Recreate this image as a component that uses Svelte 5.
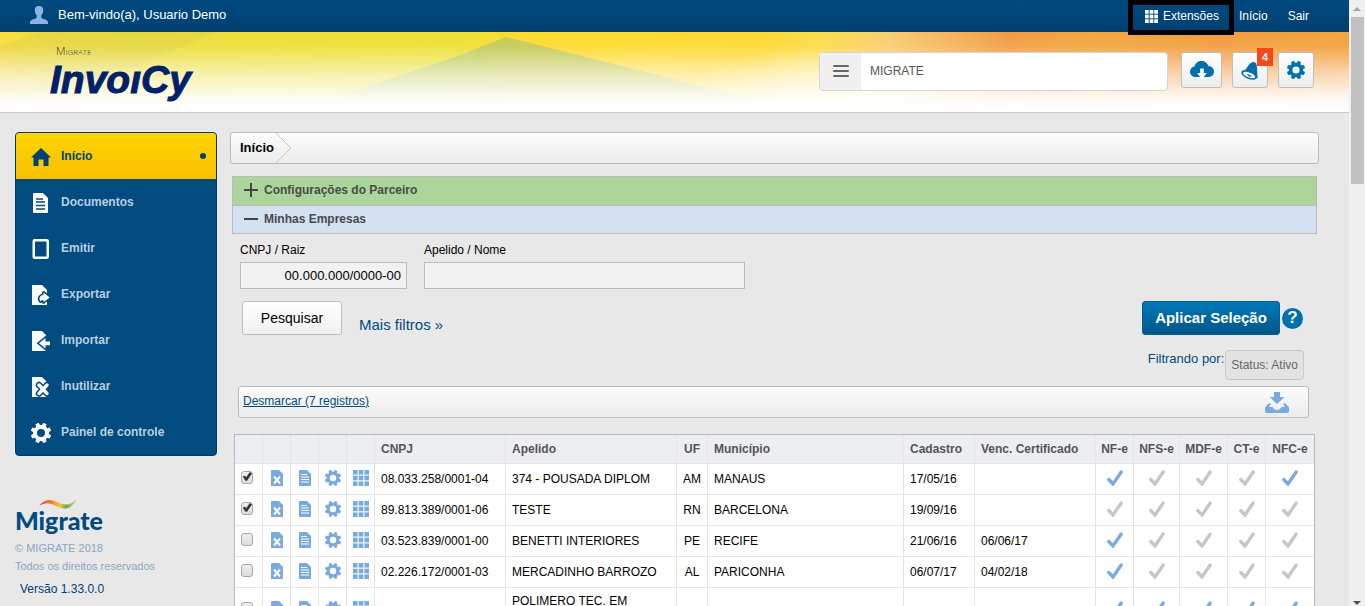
<script>
  const menu = [
    { label: 'Início', icon: 'home', active: true },
    { label: 'Documentos', icon: 'doc' },
    { label: 'Emitir', icon: 'tablet' },
    { label: 'Exportar', icon: 'export' },
    { label: 'Importar', icon: 'import' },
    { label: 'Inutilizar', icon: 'void' },
    { label: 'Painel de controle', icon: 'gear' }
  ];

  const docTypes = ['NF-e', 'NFS-e', 'MDF-e', 'CT-e', 'NFC-e'];

  const companies = [
    { on: true, cnpj: '08.033.258/0001-04', name: '374 - POUSADA DIPLOM', uf: 'AM', city: 'MANAUS', date: '17/05/16', cert: '', docs: [1, 0, 0, 0, 1] },
    { on: true, cnpj: '89.813.389/0001-06', name: 'TESTE', uf: 'RN', city: 'BARCELONA', date: '19/09/16', cert: '', docs: [0, 0, 0, 0, 0] },
    { on: false, cnpj: '03.523.839/0001-00', name: 'BENETTI INTERIORES', uf: 'PE', city: 'RECIFE', date: '21/06/16', cert: '06/06/17', docs: [1, 0, 0, 0, 0] },
    { on: false, cnpj: '02.226.172/0001-03', name: 'MERCADINHO BARROZO', uf: 'AL', city: 'PARICONHA', date: '06/07/17', cert: '04/02/18', docs: [1, 0, 0, 0, 0] },
    { on: false, cnpj: '', name: 'POLIMERO TEC. EM', uf: '', city: '', date: '', cert: '', docs: [1, 1, 1, 1, 1], tall: true }
  ];

  // Eight-toothed gear around (10,10) with a round hole.
  function gear(outer, inner, hole) {
    const at = (r, deg) => {
      const a = (deg * Math.PI) / 180;
      return `${(10 + r * Math.cos(a)).toFixed(2)} ${(10 + r * Math.sin(a)).toFixed(2)}`;
    };
    const pts = [];
    for (let i = 0; i < 8; i++) {
      const c = i * 45 + 22.5;
      pts.push(at(inner, c - 15), at(outer, c - 10), at(outer, c + 10), at(inner, c + 15));
    }
    return `M${pts.join('L')}ZM${10 - hole} 10a${hole} ${hole} 0 1 0 ${2 * hole} 0a${hole} ${hole} 0 1 0 ${-2 * hole} 0Z`;
  }

  const gearPath = gear(10.4, 8, 4);
  const cells = [0, 1, 2].flatMap((y) => [0, 1, 2].map((x) => [x * 5.7, y * 5.7]));
</script>

{#snippet grid()}
  <svg class="grid" viewBox="0 0 16 16" aria-hidden="true">
    {#each cells as [x, y]}<rect {x} {y} width="4.600" height="4.600" />{/each}
  </svg>
{/snippet}

{#snippet gearIcon()}
  <svg class="gear" viewBox="0 0 20 20" aria-hidden="true"><path fill-rule="evenodd" d={gearPath} /></svg>
{/snippet}

<div class="shell">
  <div class="page">
    <div class="topbar">
      <svg class="user" viewBox="0 0 18 18" aria-hidden="true">
        <path d="M9 0C6.200 0 4.800 1.600 4.800 4c0 2.200.6 4 1.900 5.300v2C6.500 13.500 0 13 0 16.500V18h18v-1.500C18 13 11.500 13.500 11.300 11.300v-2C12.600 8 13.200 6.200 13.200 4c0-2.400-1.400-4-4.200-4Z" />
      </svg>
      <span class="hello">Bem-vindo(a), Usuario Demo</span>
      <nav class="toplinks">
        <a class="ext" href="#ext">{@render grid()}Extensões</a>
        <a href="#inicio">Início</a>
        <a href="#sair">Sair</a>
      </nav>
    </div>

    <header class="banner">
      <svg class="art" viewBox="0 0 1349 80" preserveAspectRatio="none" aria-hidden="true">
        <defs>
          <linearGradient id="hue">
            <stop offset="0" stop-color="#fbdc3a" />
            <stop offset=".06" stop-color="#ecdd3a" />
            <stop offset=".34" stop-color="#ebe032" />
            <stop offset=".38" stop-color="#fddb2c" />
            <stop offset=".56" stop-color="#fcd82e" />
            <stop offset=".61" stop-color="#fbdc4a" />
            <stop offset=".66" stop-color="#f9cc70" />
            <stop offset=".75" stop-color="#f29a44" />
            <stop offset=".81" stop-color="#f3a23e" />
            <stop offset=".9" stop-color="#f1953e" />
            <stop offset="1" stop-color="#f2a03c" />
          </linearGradient>
          <linearGradient id="fade" x1="0" y1="0" x2="0" y2="1">
            <stop offset="0" stop-color="#fff" stop-opacity="0" />
            <stop offset=".18" stop-color="#fff" stop-opacity=".08" />
            <stop offset=".55" stop-color="#fff" stop-opacity=".62" />
            <stop offset=".85" stop-color="#fff" stop-opacity=".96" />
            <stop offset="1" stop-color="#fff" />
          </linearGradient>
          <radialGradient id="glow">
            <stop offset="0" stop-color="#fff" stop-opacity=".5" />
            <stop offset="1" stop-color="#fff" stop-opacity="0" />
          </radialGradient>
        </defs>
        <rect width="1349" height="80" fill="url(#hue)" />
        <path d="M0 14 40 0H215L120 42 0 80Z" fill="#cfc94a" fill-opacity=".3" />
        <path d="M506 5 750 66V80H350V60L455 25Z" fill="#a3c06c" fill-opacity=".62" />
        <path d="M1005 20 1065 0H1349V4L1270 24Z" fill="#f3ac3c" fill-opacity=".3" />
        <rect width="1349" height="80" fill="url(#fade)" />
        <ellipse cx="850" cy="56" rx="160" ry="40" fill="url(#glow)" />
      </svg>
      <a class="logo" href="#inicio">
        <small>Migrate</small>
        <strong>InvoıCy</strong>
      </a>
      <div class="company">
        <button type="button" aria-label="Empresas">
          <svg viewBox="0 0 16 12" aria-hidden="true"><path d="M1 1h14M1 6h14M1 11h14" stroke="#666" stroke-width="2" stroke-linecap="round" /></svg>
        </button>
        <input type="text" aria-label="Empresa" value="MIGRATE" />
      </div>
      <div class="tools">
        <button type="button" class="wide" aria-label="Downloads">
          <svg class="cloud" viewBox="0 0 24 18" aria-hidden="true">
            <path d="M6 16C2.500 16 0 13.700 0 10.700 0 8 1.800 6 4.500 5.600 5.300 2 8 0 11.500 0c3.300 0 6 2 6.900 5C21.700 5.200 24 7.500 24 10.500c0 3.200-2.300 5.500-5.600 5.500Z" />
            <path d="M10.200 7.500h3.600V12h3L12 18.500 7.200 12h3Z" fill="#fff" />
          </svg>
        </button>
        <button type="button" aria-label="Notificações">
          <svg class="bell" viewBox="0 0 20 20" aria-hidden="true">
            <path d="M12 1.200c1.500-1.300 4.500-.2 5 1.200 1 3.600 1 6 1 9.600l.4 6.600L.8 12.500 5 9C7 7 8 3 12 1.200Z" />
            <ellipse cx="9.200" cy="14.800" rx="9.300" ry="4.600" transform="rotate(21 9.200 14.800)" />
            <ellipse cx="9" cy="15" rx="7.200" ry="2.700" transform="rotate(21 9 15)" fill="#fff" />
            <path d="M7 14 12 15.800c-.6 2.200-5 1.500-5-1.800Z" />
          </svg>
          <span class="count">4</span>
        </button>
        <button type="button" aria-label="Configurações">{@render gearIcon()}</button>
      </div>
    </header>

    <div class="body">
      <aside>
        <nav class="menu">
          {#each menu as m}
            <a href={'#' + m.icon} class:active={m.active}>
              {#if m.icon === 'gear'}
                {@render gearIcon()}
              {:else}
                <svg viewBox="0 0 20 20" aria-hidden="true">
                  {#if m.icon === 'home'}
                    <path d="M10 1 0 10.500h2.500V19H7.500v-6.500h5V19h5v-8.500H20Z" />
                  {:else if m.icon === 'doc'}
                    <path d="M2 1q0-1 1-1h9l5 5v14q0 1-1 1H3q-1 0-1-1Z" />
                    <path d="M5 6h7M5 9h9M5 12.500h9M5 16h9" stroke="#004b80" stroke-width="1.300" />
                  {:else if m.icon === 'tablet'}
                    <path fill-rule="evenodd" d="M3.500 0h12Q18 0 18 2v16q0 2-2.500 2h-12Q1.500 20 1.500 18V2q0-2 2-2ZM4 2.500v15h11.500v-15Z" />
                  {:else}
                    <path d="M1 0h10l5 5v15H1Z" />
                    {#if m.icon === 'export'}
                      <path d="M12.500 7.500 18.700 12.400 12.500 17.300v-2.600q-2.200.2-3 1.800-2-2.200-.7-4.500 1.200-2 3.700-2Z" stroke="#004b80" stroke-width="3" stroke-linejoin="round" />
                      <path d="M12.500 7.500 18.700 12.400 12.500 17.300v-2.600q-2.200.2-3 1.800-2-2.200-.7-4.500 1.200-2 3.700-2Z" />
                    {:else if m.icon === 'import'}
                      <path d="M19 10.500h-4.500v-3.500L8 12.300l6.500 5.300v-3.400H19Z" stroke="#004b80" stroke-width="3" />
                      <path d="M19 10.500h-4.500v-3.500L8 12.300l6.500 5.300v-3.400H19Z" />
                    {:else}
                      <path d="M8 8 16 16.500M16 8 8 16.500" stroke="#004b80" stroke-width="6.500" stroke-linecap="round" />
                      <path d="M8 8 16 16.500M16 8 8 16.500" stroke="#fff" stroke-width="3.400" stroke-linecap="round" />
                    {/if}
                  {/if}
                </svg>
              {/if}
              <span>{m.label}</span>
              {#if m.active}<i></i>{/if}
            </a>
          {/each}
        </nav>
        <footer>
          <div class="brand">
            <svg viewBox="0 0 38 12" preserveAspectRatio="none" aria-hidden="true">
              <defs>
                <linearGradient id="wave"><stop offset="0" stop-color="#d9402a" /><stop offset=".3" stop-color="#f07a2c" /><stop offset=".55" stop-color="#f5c93a" /><stop offset=".72" stop-color="#6aa66a" /><stop offset="1" stop-color="#e8d55a" /></linearGradient>
              </defs>
              <path d="M0 8.500C6-1 12 0 19 4S31 8 38 0C32 13 26 13.500 18 9S7 3.500 0 8.500Z" fill="url(#wave)" />
            </svg>
            <strong>Migrate</strong>
          </div>
          <p>© MIGRATE 2018</p>
          <p>Todos os direitos reservados</p>
          <p class="version">Versão 1.33.0.0</p>
        </footer>
      </aside>

      <main>
        <div class="crumbs bar">
          <a href="#inicio">Início</a>
          <svg viewBox="0 0 16 30" aria-hidden="true"><path d="M0 0 15 15 0 30" fill="none" stroke="#c6c6c6" /></svg>
        </div>

        <div class="panels">
          <button type="button" class="green">
            <svg viewBox="0 0 14 14" aria-hidden="true"><path d="M7 0v14M0 7h14" /></svg>Configurações do Parceiro
          </button>
          <button type="button" class="blue">
            <svg viewBox="0 0 14 14" aria-hidden="true"><path d="M0 7h14" /></svg>Minhas Empresas
          </button>
        </div>

        <form>
          <div class="fields">
            <div class="field short">
              <label for="cnpj">CNPJ / Raiz</label>
              <input id="cnpj" type="text" value="00.000.000/0000-00" />
            </div>
            <div class="field long">
              <label for="apelido">Apelido / Nome</label>
              <input id="apelido" type="text" />
            </div>
          </div>
          <div class="actions">
            <button type="button" class="search">Pesquisar</button>
            <a href="#filtros">Mais filtros »</a>
            <button type="button" class="apply">Aplicar Seleção</button>
            <button type="button" class="help" aria-label="Ajuda">?</button>
          </div>
          <div class="filters">
            <span>Filtrando por:</span>
            <span class="tag">Status: Ativo</span>
          </div>
        </form>

        <div class="toolbar bar">
          <a href="#desmarcar">Desmarcar (7 registros)</a>
          <button type="button" aria-label="Exportar lista">
            <svg viewBox="0 0 24 21" aria-hidden="true">
              <path d="M9 0h6v5h4.500L12 12 4.500 5H9Z" />
              <path d="M3.500 11.500H6.200L4 15h3.500q1.500 3 4.500 3t4.500-3H20l-2.200-3.500h2.700L24 15.500V19q0 2-2 2H2q-2 0-2-2v-3.500Z" />
            </svg>
          </button>
        </div>

        <table>
          <colgroup>
            <col class="c-sel" />
            {#each [1, 2, 3, 4] as n (n)}<col class="c-icon" />{/each}
            <col class="c-cnpj" /><col class="c-name" /><col class="c-uf" /><col /><col class="c-date" /><col class="c-cert" />
            <col class="c-small" /><col class="c-mid" /><col class="c-large" /><col class="c-small" /><col class="c-large" />
          </colgroup>
          <thead>
            <tr>
              <th></th><th></th><th></th><th></th><th></th>
              <th>CNPJ</th><th>Apelido</th><th class="mid">UF</th><th>Município</th><th>Cadastro</th><th>Venc. Certificado</th>
              {#each docTypes as d}<th class="mid">{d}</th>{/each}
            </tr>
          </thead>
          <tbody>
            {#each companies as c}
              <tr class:tall={c.tall}>
                <td class="sel"><input type="checkbox" checked={c.on} aria-label={c.name} /></td>
                <td class="pic">
                  <svg class="file" viewBox="0 0 12 16" aria-hidden="true"><path d="M1 0h7l4 4v12H0V1q0-1 1-1Z" /><path d="M3 6.500 9 13.500M9 6.500 3 13.500" stroke="#fff" stroke-width="2" /></svg>
                </td>
                <td class="pic">
                  <svg class="file" viewBox="0 0 12 16" aria-hidden="true"><path d="M1 0h7l4 4v11q0 1-1 1H1q-1 0-1-1V1q0-1 1-1Z" /><path d="M2 4.500h6M2 7h8M2 9.500h8M2 12h8" stroke="#fff" /></svg>
                </td>
                <td class="pic">{@render gearIcon()}</td>
                <td class="pic">{@render grid()}</td>
                <td>{c.cnpj}</td>
                <td class="name">{c.name}</td>
                <td class="mid">{c.uf}</td>
                <td>{c.city}</td>
                <td>{c.date}</td>
                <td>{c.cert}</td>
                {#each c.docs as ok}
                  <td class="pic">
                    <svg class="tick" class:ok viewBox="0 0 16 16" aria-hidden="true"><path d="M1.800 9.500 6 14 14.200 2" fill="none" stroke-width="3.300" stroke-linecap="round" /></svg>
                  </td>
                {/each}
              </tr>
            {/each}
          </tbody>
        </table>
      </main>
    </div>
  </div>

  <div class="scroll" aria-hidden="true">
    <svg viewBox="0 0 8 4"><path d="M4 0 8 4H0Z" fill="#a3a3a3" /></svg>
    <div class="thumb"></div>
    <svg viewBox="0 0 8 4"><path d="M0 0H8L4 4Z" fill="#505050" /></svg>
  </div>
</div>

<style>
  :global(body) {
    margin: 0;
    background: #e8e8e8;
  }
  .shell, .shell * { box-sizing: border-box; }
  .shell {
    display: flex;
    height: 100vh;
    overflow: hidden;
    font: 12px/18px 'Liberation Sans', Arial, sans-serif;
    color: #000;
  }
  button, input { font: inherit; margin: 0; }
  button { padding: 0; cursor: pointer; }
  a { color: inherit; text-decoration: none; }
  p { margin: 0; }
  svg { display: block; flex: none; }
  .page { flex: 1; min-width: 0; }
  .grid, .gear, .file { fill: #78aae0; }

  .topbar {
    display: flex;
    align-items: center;
    height: 32px;
    padding: 0 40px 2px 30px;
    gap: 10px;
    background: linear-gradient(#004a80, #00406f);
    color: #fff;
  }
  .user { width: 18px; height: 18px; fill: #8cb4e2; }
  .hello { font-size: 13px; }
  .toplinks {
    display: flex;
    align-items: center;
    gap: 20px;
    margin-left: auto;
    padding-top: 2px;
  }
  .ext { position: relative; display: flex; align-items: center; gap: 5px; }
  .ext .grid { width: 13px; height: 13px; fill: #fff; }
  .ext::after {
    content: '';
    position: absolute;
    z-index: 2;
    inset: -7px -15px -10px -17px;
    border: 5px solid #000;
  }

  .banner {
    position: relative;
    display: flex;
    align-items: flex-start;
    height: 81px;
    padding: 20px 35px 0 50px;
    gap: 13px;
    border-bottom: 1px solid #c9c9c9;
    background: #fff;
  }
  .art { position: absolute; inset: 0; width: 100%; height: 100%; }
  .logo {
    position: relative;
    display: flex;
    flex-direction: column;
    margin: -8px auto 0 0;
    color: #00206a;
  }
  .logo small {
    padding-left: 6px;
    font: 300 11px/14px 'Open Sans', sans-serif;
    font-variant: small-caps;
    color: #333;
  }
  .logo strong {
    font-size: 39px;
    font-style: italic;
    line-height: 44px;
    -webkit-text-stroke: 1px #00206a;
  }
  .company {
    position: relative;
    display: flex;
    flex: 0 1 349px;
    height: 39px;
    border: 1px solid #d5d5d5;
    border-radius: 4px;
    background: #fff;
    overflow: hidden;
  }
  .company button {
    display: flex;
    align-items: center;
    justify-content: center;
    width: 41px;
    padding-bottom: 1px;
    border: 0;
    background: #f0f0f0;
  }
  .company svg { width: 16px; height: 12px; }
  .company input {
    flex: 1;
    min-width: 0;
    padding: 0 9px 2px;
    border: 0;
    background: none;
    color: #555;
  }
  .tools { position: relative; display: flex; gap: 10px; }
  .tools button {
    position: relative;
    display: flex;
    align-items: center;
    justify-content: center;
    width: 36px;
    height: 36px;
    border: 1px solid #bfbfbf;
    border-radius: 3px;
    background: linear-gradient(#fff, #ededed);
  }
  .tools .wide { width: 41px; }
  .tools svg { fill: #0070ac; }
  .cloud { width: 24px; height: 18px; }
  .bell { width: 18px; height: 19px; }
  .tools .gear { width: 18px; height: 18px; }
  .count {
    position: absolute;
    top: -5px;
    right: -6px;
    width: 16px;
    background: #f8471a;
    color: #fff;
    font-size: 11px;
    font-weight: bold;
  }

  .body { display: flex; align-items: flex-start; gap: 13px; padding: 19px 30px 0 15px; }
  aside { flex: none; width: 202px; }
  .menu {
    border: 1px solid #003a68;
    border-radius: 4px;
    background: #004b80;
    overflow: hidden;
  }
  .menu a {
    display: flex;
    align-items: center;
    gap: 10px;
    height: 46px;
    padding: 0 10px 0 15px;
    color: #b9cfe2;
    font-weight: bold;
  }
  .menu svg { width: 20px; height: 20px; margin-top: 2px; fill: #fff; }
  .menu .active { background: linear-gradient(#fed500, #f7bf00); color: #004175; }
  .menu .active svg { fill: #004175; }
  .menu i { width: 6px; height: 6px; margin-left: auto; border-radius: 50%; background: #004175; }
  footer { margin-top: 43px; font-size: 11px; color: #8ba6c1; }
  .brand { width: 90px; margin-bottom: 8px; }
  .brand svg { width: 38px; height: 10px; margin-left: 24px; }
  .brand strong {
    display: block;
    font: 900 25px/22px Lato, sans-serif;
    color: #004b80;
  }
  .version { padding: 5px 0 0 5px; font-size: 12px; color: #004175; }

  main { flex: 1; min-width: 0; }
  .bar {
    display: flex;
    border: 1px solid #bcbcbc;
    border-radius: 3px;
    background: linear-gradient(#fcfcfc, #ececec);
  }
  .crumbs { height: 32px; padding-left: 9px; gap: 2px; }
  .crumbs a { font-size: 13px; font-weight: bold; line-height: 29px; }
  .crumbs svg { width: 16px; height: 30px; }
  .panels {
    display: flex;
    flex-direction: column;
    margin: 12px 2px 0;
    border: 1px solid #bbb;
  }
  .panels button {
    display: flex;
    align-items: center;
    gap: 6px;
    height: 27px;
    padding: 0 11px 2px;
    border: 0;
    color: #4a4a4a;
    font-weight: bold;
  }
  .panels svg { width: 14px; height: 14px; stroke: #444; stroke-width: 2; }
  .green { background: #acd59b; }
  .panels .green { height: 29px; border-bottom: 1px solid #bbb; }
  .blue { background: #d4e1f3; }

  form { padding: 7px 10px 0; }
  .fields { display: flex; gap: 17px; }
  .field { display: flex; flex-direction: column; gap: 3px; }
  .field input {
    width: 100%;
    height: 27px;
    padding: 0 5px;
    border: 1px solid #bbb;
    background: #f1f1f1;
    font-size: 13px;
    text-align: right;
  }
  .short { width: 167px; }
  .long { width: 321px; }
  .actions { display: flex; align-items: center; margin: 12px 6px 0 2px; }
  .actions a { margin: 13px auto 0 17px; color: #004b80; font-size: 15px; }
  .search {
    width: 100px;
    height: 34px;
    border: 1px solid #bfbfbf;
    border-radius: 3px;
    background: linear-gradient(#fff, #f0f0f0);
    font-size: 14px;
  }
  .apply {
    width: 138px;
    height: 34px;
    border: 1px solid #005e98;
    border-radius: 3px;
    background: linear-gradient(#0079b8, #00568a);
    color: #fff;
    font-size: 15px;
    font-weight: bold;
  }
  .help {
    width: 21px;
    height: 21px;
    margin-left: 2px;
    border: 0;
    border-radius: 50%;
    background: #0070ac;
    color: #fff;
    font-size: 17px;
    font-weight: bold;
  }
  .filters {
    display: flex;
    justify-content: flex-end;
    gap: 1px;
    margin: 15px 5px 0;
    color: #004b80;
    font-size: 13px;
  }
  .tag {
    padding: 5px;
    border: 1px solid #c8c8c8;
    border-radius: 4px;
    background: #e2e2e2;
    color: #666;
    font-size: 12px;
  }
  .toolbar {
    align-items: flex-start;
    justify-content: space-between;
    height: 32px;
    margin: 6px 10px 0 8px;
    padding: 5px 19px 0 4px;
    color: #004b80;
  }
  .toolbar a { text-decoration: underline; }
  .toolbar button { border: 0; background: none; }
  .toolbar svg { width: 24px; height: 21px; fill: #78aae0; }

  table {
    width: calc(100% - 8px);
    margin: 16px 4px 0;
    border: 1px solid #b4bac4;
    border-collapse: separate;
    border-spacing: 0;
    table-layout: fixed;
    background: #fff;
  }
  .c-sel, .c-icon { width: 28px; }
  .c-cnpj { width: 131px; }
  .c-name { width: 171px; }
  .c-uf { width: 31px; }
  .c-date { width: 71px; }
  .c-cert { width: 121px; }
  .c-small { width: 38px; }
  .c-mid { width: 46px; }
  .c-large { width: 48px; }
  th, td {
    height: 31px;
    padding: 0 0 0 6px;
    border: solid #e4e4e8;
    border-width: 0 1px 1px 0;
    text-align: left;
  }
  th { height: 29px; background: #eceef2; color: #555; white-space: nowrap; }
  th:last-child, td:last-child { border-right: 0; }
  .mid, .pic { padding: 0; text-align: center; }
  .pic svg { margin: 0 auto 3px; width: 16px; height: 16px; }
  .pic .file { width: 12px; }
  .tick { stroke: #c6c6c6; }
  .ok { stroke: #78aae0; }
  .tall td { height: 46px; }
  .tall .name { padding-top: 4px; vertical-align: top; }
  .sel input {
    appearance: none;
    display: block;
    width: 12px;
    height: 13px;
    margin-bottom: 4px;
    border: 1px solid #a8a8a8;
    border-radius: 3px;
    background: linear-gradient(#eee, #dcdcdc);
  }
  .sel input:checked::before {
    content: '';
    display: block;
    width: 10px;
    height: 10px;
    background: #333;
    clip-path: polygon(8% 50%, 30% 42%, 42% 58%, 78% 6%, 100% 20%, 50% 92%, 34% 92%);
  }

  .scroll {
    display: flex;
    flex-direction: column;
    align-items: center;
    flex: none;
    width: 16px;
    padding: 7px 0 1px;
    background: #f0f0f0;
  }
  .scroll svg { width: 8px; height: 4px; }
  .thumb { width: 13px; height: 28%; margin: 6px 0 auto; background: #c1c1c1; }
</style>
